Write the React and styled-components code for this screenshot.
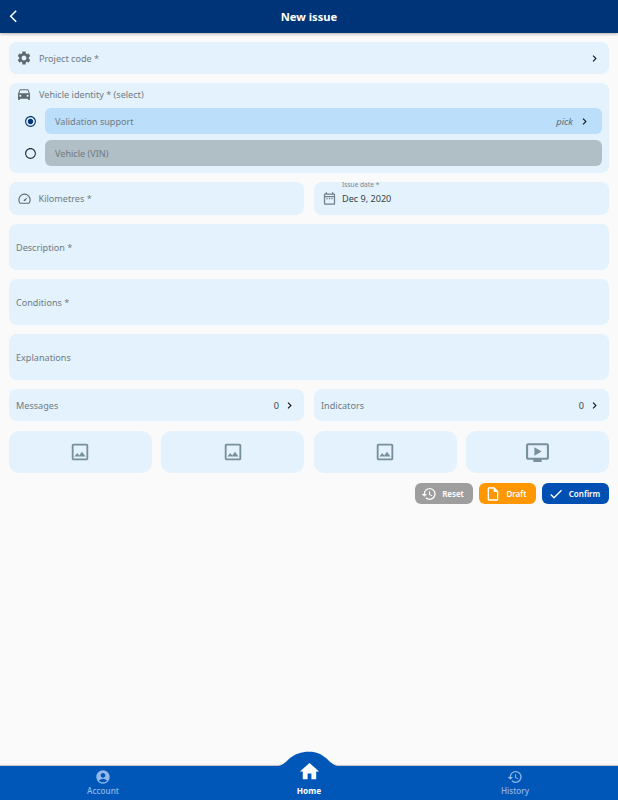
import React from 'react';
import styled, { createGlobalStyle } from 'styled-components';
import {
  MdSettings, MdDirectionsCar, MdChevronRight, MdArrowBackIosNew, MdRadioButtonChecked,
  MdRadioButtonUnchecked, MdOutlineDateRange, MdOutlineImage, MdOutlineOndemandVideo,
  MdRestore, MdOutlineInsertDriveFile, MdCheck, MdHome, MdAccountCircle, MdHistory,
} from 'react-icons/md';

const Global = createGlobalStyle`
  html, body { margin: 0; padding: 0; background: #fafafa; }
  body { font-family: "Noto Sans", "Open Sans", sans-serif; }
  * { box-sizing: border-box; }
`;
const Page = styled.div`
  width: 618px; height: 800px; display: flex; flex-direction: column; background: #fafafa; overflow: hidden;
`;
const Header = styled.header`
  height: 33px; flex: none; background: #003478; color: #fff; display: flex; align-items: center; justify-content: center;
  position: relative; box-shadow: 0 1px 3px rgba(0,0,0,.3);
  font-size: 11.2px; font-weight: 700; padding-bottom: 1px;
`;
const Back = styled.span`
  position: absolute; left: 6px; top: 9px; display: flex; font-size: 14.5px;
`;
const Form = styled.main`
  flex: 1; padding: 9px 9px 0; display: flex; flex-direction: column; gap: 9px;
`;
const Panel = styled.div`
  background: #e3f2fd; border-radius: 8px; display: flex; align-items: center;
  height: ${p => p.$h}px; padding: 0 8px 0 7px; flex: ${p => p.$grow ? 1 : 'none'};
  min-width: 0;
`;
const Group = styled.div`
  background: #e3f2fd; border-radius: 8px; height: 90px; padding: 0 7px 7px 7px;
  display: flex; flex-direction: column;
`;
const GroupTitle = styled.div`
  display: flex; align-items: center; height: 22px;
`;
const Option = styled.div`
  display: flex; align-items: center; height: 26px; margin-top: ${p => p.$mt}px;
`;
const RadioSlot = styled.span`
  width: 29px; flex: none; display: flex; justify-content: center; font-size: 13px; color: ${p => p.$on ? '#003478' : '#263238'};
  svg { display: block; }
`;
const OptionBar = styled.div`
  flex: 1; height: 26px; border-radius: 6px; background: ${p => p.$bg}; display: flex; align-items: center; padding: 0 11px 0 10px;
`;
const IconSlot = styled.span`
  width: 16px; flex: none; margin-right: ${p => p.$mr ?? 7}px; display: flex; justify-content: center; color: ${p => p.$c ?? '#5f6a70'}; font-size: ${p => p.$s ?? 16}px;
  svg { display: block; }
`;
const Label = styled.span`
  font-size: 9.1px; color: #6f7b83; flex: 1; white-space: nowrap;
`;
const Pick = styled.span`
  font-size: 9.4px; font-style: italic; color: #5f6b74; margin-right: 5px;
`;
const Count = styled.span`
  font-size: 9.1px; color: #37424a; margin-right: 4px;
`;
const Chev = styled.span`
  display: flex; color: #111; font-size: 13px; svg { display: block; }
`;
const Row = styled.div`
  display: flex; gap: 10px;
`;
const DateWrap = styled.div`
  flex: 1; display: flex; flex-direction: column; position: relative;
`;
const DateCaption = styled.span`
  position: absolute; top: -13px; left: 0; font-size: 6.6px; line-height: 10px; color: #7c878e; white-space: nowrap;
`;
const DateValue = styled.span`
  font-size: 9.1px; line-height: 12px; color: #37424a;
`;
const Media = styled.div`
  display: grid; grid-template-columns: repeat(4, 1fr); gap: 9.6px; margin-top: 1px;
`;
const MediaCell = styled.div`
  height: 42px; background: #e3f2fd; border-radius: 10px; display: flex; align-items: center; justify-content: center;
  color: #78909c; font-size: ${p => p.$s ?? 22}px;
  svg { display: block; }
`;
const Actions = styled.div`
  display: flex; justify-content: flex-end; gap: 6px; margin-top: 1px;
`;
const Action = styled.button`
  all: unset; box-sizing: border-box; height: 21px; width: ${p => p.$w}px; border-radius: 6px; background: ${p => p.$bg}; color: #fff;
  display: flex; align-items: center; justify-content: center; gap: 5px; padding-right: 3px; font-size: 8px; font-weight: 600;
  font-family: "Noto Sans", sans-serif;
  svg { display: block; font-size: 16px; }
`;
const Nav = styled.nav`
  height: 34px; flex: none; background: #0057b8; display: grid; grid-template-columns: repeat(3, 1fr); position: relative;
  box-shadow: 0 -1px 1px rgba(0,0,0,.2);
`;
const Bump = styled.svg`
  position: absolute; left: 269px; top: -15px; width: 80px; height: 16px; display: block;
`;
const NavItem = styled.div`
  display: flex; flex-direction: column; align-items: center; position: relative;
  color: ${p => p.$on ? '#fff' : '#90b8e8'}; font-size: 8.2px; font-weight: ${p => p.$on ? 700 : 500};
`;
const NavIcon = styled.span`
  height: 16px; margin-top: 3px; display: flex; align-items: center; justify-content: center; font-size: 16px;
  svg { display: block; }
`;
const HomeIcon = styled.span`
  position: absolute; top: -6px; display: flex; font-size: 23px; svg { display: block; }
`;
const NavText = styled.span`
  position: absolute; top: 19px; white-space: nowrap;
`;

const Gauge = () => (
  <svg width="15" height="15" viewBox="0 0 24 24" fill="none" stroke="currentColor" strokeWidth="1.8">
    <path d="M5.5 19.5h13a2 2 0 0 0 1.5-1A9.2 9.2 0 0 0 21 14a9 9 0 0 0-18 0c0 1.6.4 3.2 1.1 4.5.3.6.8 1 1.4 1z" />
    <path d="M10.6 15.4a2 2 0 0 0 2.8 0L17 10l-5.4 3.6a1.4 1.4 0 0 0-1 1.8z" fill="currentColor" stroke="none" />
  </svg>
);

export default function App() {
  return (
    <Page>
      <Global />
      <Header>
        <Back><MdArrowBackIosNew /></Back>
        New issue
      </Header>
      <Form>
        <Panel $h={32}>
          <IconSlot><MdSettings /></IconSlot>
          <Label>Project code *</Label>
          <Chev><MdChevronRight /></Chev>
        </Panel>
        <Group>
          <GroupTitle>
            <IconSlot><MdDirectionsCar /></IconSlot>
            <Label>Vehicle identity * (select)</Label>
          </GroupTitle>
          <Option $mt={3}>
            <RadioSlot $on><MdRadioButtonChecked /></RadioSlot>
            <OptionBar $bg="#bbdefb">
              <Label>Validation support</Label>
              <Pick>pick</Pick>
              <Chev><MdChevronRight /></Chev>
            </OptionBar>
          </Option>
          <Option $mt={6}>
            <RadioSlot><MdRadioButtonUnchecked /></RadioSlot>
            <OptionBar $bg="#b0bec5">
              <Label>Vehicle (VIN)</Label>
            </OptionBar>
          </Option>
        </Group>
        <Row>
          <Panel $h={33} $grow>
            <IconSlot $mr={6.5}><Gauge /></IconSlot>
            <Label>Kilometres *</Label>
          </Panel>
          <Panel $h={33} $grow>
            <IconSlot $s={15} $mr={5} $c="#6f7f88"><MdOutlineDateRange /></IconSlot>
            <DateWrap>
              <DateCaption>Issue date *</DateCaption>
              <DateValue>Dec 9, 2020</DateValue>
            </DateWrap>
          </Panel>
        </Row>
        <Panel $h={46}><Label>Description *</Label></Panel>
        <Panel $h={46}><Label>Conditions *</Label></Panel>
        <Panel $h={46}><Label>Explanations</Label></Panel>
        <Row>
          <Panel $h={32} $grow>
            <Label>Messages</Label>
            <Count>0</Count>
            <Chev><MdChevronRight /></Chev>
          </Panel>
          <Panel $h={32} $grow>
            <Label>Indicators</Label>
            <Count>0</Count>
            <Chev><MdChevronRight /></Chev>
          </Panel>
        </Row>
        <Media>
          <MediaCell><MdOutlineImage /></MediaCell>
          <MediaCell><MdOutlineImage /></MediaCell>
          <MediaCell><MdOutlineImage /></MediaCell>
          <MediaCell $s={25}><MdOutlineOndemandVideo /></MediaCell>
        </Media>
        <Actions>
          <Action $w={58} $bg="#9e9e9e"><MdRestore />Reset</Action>
          <Action $w={57} $bg="#ff9800"><MdOutlineInsertDriveFile />Draft</Action>
          <Action $w={67} $bg="#0050b3"><MdCheck />Confirm</Action>
        </Actions>
      </Form>
      <Nav>
        <Bump viewBox="0 0 80 16">
          <path d="M0 16H4C12 15.5 15 13 21 7C26 3 32 .7 40 .7C48 .7 52 3 57 7C63 13 66 15.5 74 16H80Z" fill="#0057b8" />
        </Bump>
        <NavItem>
          <NavIcon><MdAccountCircle /></NavIcon>
          <NavText>Account</NavText>
        </NavItem>
        <NavItem $on>
          <HomeIcon><MdHome /></HomeIcon>
          <NavText>Home</NavText>
        </NavItem>
        <NavItem>
          <NavIcon><MdHistory /></NavIcon>
          <NavText>History</NavText>
        </NavItem>
      </Nav>
    </Page>
  );
}
